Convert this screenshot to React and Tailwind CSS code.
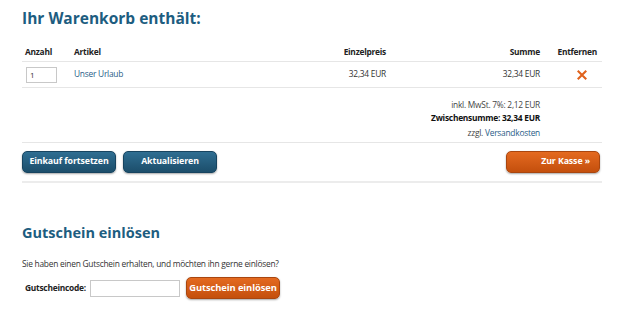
import React, { useState } from "react";

const App = () => {
  const [qty, setQty] = useState("1");
  const [code, setCode] = useState("");

  return (
    <div className="w-[625px] h-[333px] bg-white text-[#333] font-['Open_Sans',sans-serif] overflow-hidden">
      <div className="pl-[22px] w-[602px]">
        <h1 className="pt-[8px] h-[40px] text-[15.5px] leading-[20px] font-bold text-[#1d5d80]">
          Ihr Warenkorb enthält:
        </h1>

        {/* Warenkorb-Tabelle */}
        <div className="grid grid-cols-[52px_1fr_120px_154px_62px] text-[8.4px] tracking-[-0.25px] items-center h-[22px] pt-[4px] border-b border-[#e6e6e6] font-bold text-[#222]">
          <div className="pl-[3px]">Anzahl</div>
          <div>Artikel</div>
          <div className="text-right">Einzelpreis</div>
          <div className="text-right">Summe</div>
          <div className="text-right pr-[5px]">Entfernen</div>
        </div>
        <div className="grid grid-cols-[52px_1fr_120px_154px_62px] text-[8.4px] tracking-[-0.25px] items-center h-[26px] border-b border-[#e6e6e6]">
          <div className="pl-[4px]">
            <input
              value={qty}
              onChange={(e) => setQty(e.target.value)}
              className="w-[31px] h-[16px] border border-[#c8c8c8] px-[3px] text-[8px] outline-none"
            />
          </div>
          <div className="text-[#2a5d88]">Unser Urlaub</div>
          <div className="text-right">32,34 EUR</div>
          <div className="text-right">32,34 EUR</div>
          <div className="flex justify-end pr-[15px]">
            <svg width="10" height="10" viewBox="0 0 10 10">
              <path d="M1.5 1.5 L8.5 8.5 M8.5 1.5 L1.5 8.5" stroke="#e0621c" strokeWidth="2.1" strokeLinecap="square" />
            </svg>
          </div>
        </div>

        <div className="flex flex-col items-end pr-[62px] pt-[10px] text-[8.4px] tracking-[-0.25px] leading-[13px] border-b border-[#e6e6e6] h-[55px]">
          <div className="text-[#444]">inkl. MwSt. 7%: 2,12 EUR</div>
          <div className="font-bold text-[#111]">Zwischensumme: 32,34 EUR</div>
          <div className="text-[#444] mt-[2px]">
            zzgl. <span className="text-[#2a5d88]">Versandkosten</span>
          </div>
        </div>

        <div className="flex items-center justify-between h-[40px] border-b-2 border-[#ececec]">
          <div className="flex gap-[7px]">
            <button className="w-[94px] h-[22px] rounded-[5px] bg-gradient-to-b from-[#2f6e92] to-[#1c4e6b] border border-[#174460] shadow-[0_1px_2px_rgba(0,0,0,0.35)] text-white text-[8.8px] tracking-[-0.1px] font-bold whitespace-nowrap">
              Einkauf fortsetzen
            </button>
            <button className="w-[94px] h-[22px] rounded-[5px] bg-gradient-to-b from-[#2f6e92] to-[#1c4e6b] border border-[#174460] shadow-[0_1px_2px_rgba(0,0,0,0.35)] text-white text-[8.8px] tracking-[-0.1px] font-bold whitespace-nowrap">
              Aktualisieren
            </button>
          </div>
          <button className="w-[94px] h-[22px] mr-[2px] rounded-[5px] bg-gradient-to-b from-[#e46a20] to-[#c44f0c] border border-[#a9460f] shadow-[0_1px_2px_rgba(0,0,0,0.35)] text-white text-[8.8px] tracking-[-0.1px] font-bold text-right pr-[9px] whitespace-nowrap">
            Zur Kasse »
          </button>
        </div>

        {/* Gutschein */}
        <h2 className="mt-[40px] text-[14.5px] leading-[20px] font-bold text-[#1d5d80]">
          Gutschein einlösen
        </h2>
        <p className="mt-[14px] text-[8.4px] tracking-[-0.25px] leading-[13px] text-[#333]">
          Sie haben einen Gutschein erhalten, und möchten ihn gerne einlösen?
        </p>
        <div className="mt-[7px] flex items-center">
          <label className="pl-[3px] w-[68px] text-[8.4px] tracking-[-0.25px] font-bold text-[#222] whitespace-nowrap">Gutscheincode:</label>
          <input
            value={code}
            onChange={(e) => setCode(e.target.value)}
            className="w-[90px] h-[17px] border border-[#c8c8c8] outline-none text-[8px] px-[3px]"
          />
          <button className="ml-[6px] w-[94px] h-[22px] rounded-[5px] bg-gradient-to-b from-[#e46a20] to-[#c44f0c] border border-[#a9460f] shadow-[0_1px_2px_rgba(0,0,0,0.35)] text-white text-[9.4px] tracking-[-0.1px] font-bold whitespace-nowrap">
            Gutschein einlösen
          </button>
        </div>
      </div>
    </div>
  );
};

export default App;
